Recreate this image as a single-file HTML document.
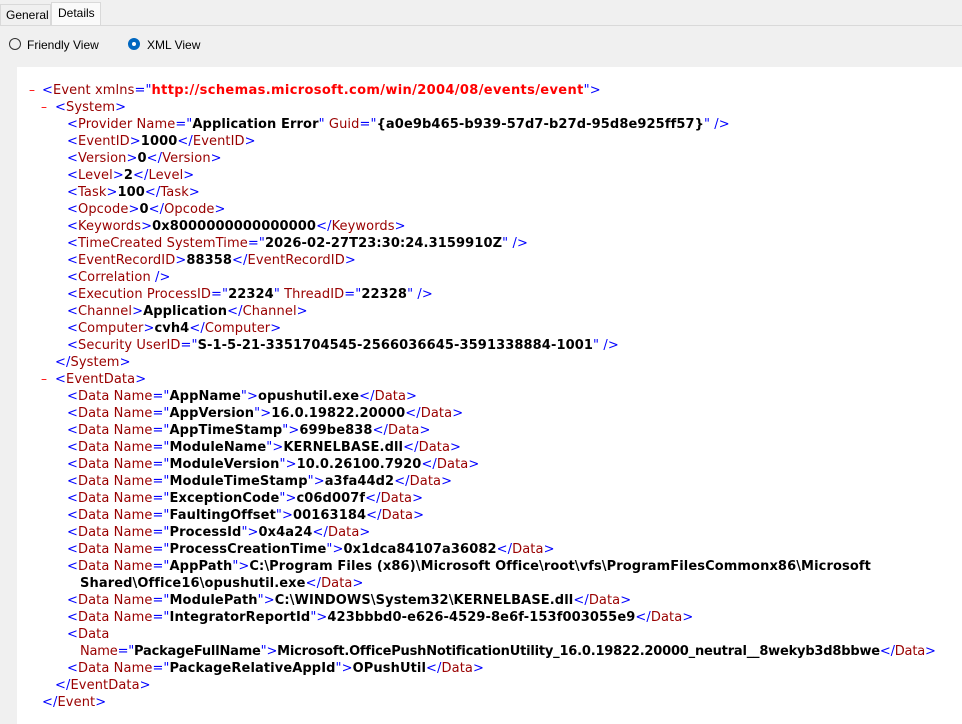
<!DOCTYPE html>
<html><head><style>
body{margin:0;width:962px;height:724px;background:#f0f0f0;font-family:"Liberation Sans",sans-serif;overflow:hidden;position:relative}
.tab{position:absolute;font-size:12px;color:#000}
.rad{position:absolute;top:38px;width:12px;height:12px;border-radius:50%;box-sizing:border-box}
.box{position:absolute;left:17px;top:67px;right:0;bottom:0;background:#fff}
.l{position:absolute;white-space:pre;font-family:"DejaVu Sans",Verdana,sans-serif;font-size:13px;letter-spacing:0.1px;line-height:17px;color:#000}
.m{position:absolute;font-family:"DejaVu Sans",sans-serif;font-size:12px;line-height:17px;color:#ff0000}
.b{color:#0000ff}.t{color:#990000}.r{color:#ff0000}.v{font-weight:bold}.rv{color:#ff0000;font-weight:bold}
</style></head><body>
<div style="position:absolute;left:0;top:4px;width:51px;height:21px;border:1px solid #d9d9d9;border-bottom:none;box-sizing:border-box"></div>
<div style="position:absolute;left:51px;top:2px;width:50px;height:24px;background:#fafafa;border:1px solid #d9d9d9;border-bottom:none;box-sizing:border-box"></div>
<div style="position:absolute;left:0;top:25px;right:0;height:1px;background:#d9d9d9"></div>
<div class="tab" style="left:6px;top:8px">General</div>
<div class="tab" style="left:58px;top:6px">Details</div>
<div class="rad" style="left:9px;border:1px solid #333"></div>
<div class="tab" style="left:27px;top:38px">Friendly View</div>
<div class="rad" style="left:128px;border:4px solid #0067c0;background:#fff"></div>
<div class="tab" style="left:147px;top:38px">XML View</div>
<div class="box"></div>
<div class="m" style="left:29px;top:82px">–</div>
<div class="m" style="left:41px;top:99px">–</div>
<div class="m" style="left:41px;top:371px">–</div>
<div class="l" style="left:42px;top:82px"><span class="b">&lt;</span><span class="t">Event xmlns</span><span class="b">="</span><span class="rv" style="letter-spacing:0.35px">http://schemas.microsoft.com/win/2004/08/events/event</span><span class="b">"&gt;</span></div>
<div class="l" style="left:55px;top:99px"><span class="b">&lt;</span><span class="t">System</span><span class="b">&gt;</span></div>
<div class="l" style="left:67px;top:116px"><span class="b">&lt;</span><span class="t">Provider Name</span><span class="b">="</span><span class="v">Application Error</span><span class="b">"</span> <span class="t">Guid</span><span class="b">="</span><span class="v">{a0e9b465-b939-57d7-b27d-95d8e925ff57}</span><span class="b">" /&gt;</span></div>
<div class="l" style="left:67px;top:133px"><span class="b">&lt;</span><span class="t">EventID</span><span class="b">&gt;</span><span class="v">1000</span><span class="b">&lt;/</span><span class="t">EventID</span><span class="b">&gt;</span></div>
<div class="l" style="left:67px;top:150px"><span class="b">&lt;</span><span class="t">Version</span><span class="b">&gt;</span><span class="v">0</span><span class="b">&lt;/</span><span class="t">Version</span><span class="b">&gt;</span></div>
<div class="l" style="left:67px;top:167px"><span class="b">&lt;</span><span class="t">Level</span><span class="b">&gt;</span><span class="v">2</span><span class="b">&lt;/</span><span class="t">Level</span><span class="b">&gt;</span></div>
<div class="l" style="left:67px;top:184px"><span class="b">&lt;</span><span class="t">Task</span><span class="b">&gt;</span><span class="v">100</span><span class="b">&lt;/</span><span class="t">Task</span><span class="b">&gt;</span></div>
<div class="l" style="left:67px;top:201px"><span class="b">&lt;</span><span class="t">Opcode</span><span class="b">&gt;</span><span class="v">0</span><span class="b">&lt;/</span><span class="t">Opcode</span><span class="b">&gt;</span></div>
<div class="l" style="left:67px;top:218px"><span class="b">&lt;</span><span class="t">Keywords</span><span class="b">&gt;</span><span class="v">0x8000000000000000</span><span class="b">&lt;/</span><span class="t">Keywords</span><span class="b">&gt;</span></div>
<div class="l" style="left:67px;top:235px"><span class="b">&lt;</span><span class="t">TimeCreated SystemTime</span><span class="b">="</span><span class="v">2026-02-27T23:30:24.3159910Z</span><span class="b">" /&gt;</span></div>
<div class="l" style="left:67px;top:252px"><span class="b">&lt;</span><span class="t">EventRecordID</span><span class="b">&gt;</span><span class="v">88358</span><span class="b">&lt;/</span><span class="t">EventRecordID</span><span class="b">&gt;</span></div>
<div class="l" style="left:67px;top:269px"><span class="b">&lt;</span><span class="t">Correlation</span><span class="b"> /&gt;</span></div>
<div class="l" style="left:67px;top:286px"><span class="b">&lt;</span><span class="t">Execution ProcessID</span><span class="b">="</span><span class="v">22324</span><span class="b">"</span> <span class="t">ThreadID</span><span class="b">="</span><span class="v">22328</span><span class="b">" /&gt;</span></div>
<div class="l" style="left:67px;top:303px"><span class="b">&lt;</span><span class="t">Channel</span><span class="b">&gt;</span><span class="v">Application</span><span class="b">&lt;/</span><span class="t">Channel</span><span class="b">&gt;</span></div>
<div class="l" style="left:67px;top:320px"><span class="b">&lt;</span><span class="t">Computer</span><span class="b">&gt;</span><span class="v">cvh4</span><span class="b">&lt;/</span><span class="t">Computer</span><span class="b">&gt;</span></div>
<div class="l" style="left:67px;top:337px"><span class="b">&lt;</span><span class="t">Security UserID</span><span class="b">="</span><span class="v">S-1-5-21-3351704545-2566036645-3591338884-1001</span><span class="b">" /&gt;</span></div>
<div class="l" style="left:55px;top:354px"><span class="b">&lt;/</span><span class="t">System</span><span class="b">&gt;</span></div>
<div class="l" style="left:55px;top:371px"><span class="b">&lt;</span><span class="t">EventData</span><span class="b">&gt;</span></div>
<div class="l" style="left:67px;top:388px"><span class="b">&lt;</span><span class="t">Data Name</span><span class="b">="</span><span class="v">AppName</span><span class="b">"&gt;</span><span class="v">opushutil.exe</span><span class="b">&lt;/</span><span class="t">Data</span><span class="b">&gt;</span></div>
<div class="l" style="left:67px;top:405px"><span class="b">&lt;</span><span class="t">Data Name</span><span class="b">="</span><span class="v">AppVersion</span><span class="b">"&gt;</span><span class="v">16.0.19822.20000</span><span class="b">&lt;/</span><span class="t">Data</span><span class="b">&gt;</span></div>
<div class="l" style="left:67px;top:422px"><span class="b">&lt;</span><span class="t">Data Name</span><span class="b">="</span><span class="v">AppTimeStamp</span><span class="b">"&gt;</span><span class="v">699be838</span><span class="b">&lt;/</span><span class="t">Data</span><span class="b">&gt;</span></div>
<div class="l" style="left:67px;top:439px"><span class="b">&lt;</span><span class="t">Data Name</span><span class="b">="</span><span class="v">ModuleName</span><span class="b">"&gt;</span><span class="v">KERNELBASE.dll</span><span class="b">&lt;/</span><span class="t">Data</span><span class="b">&gt;</span></div>
<div class="l" style="left:67px;top:456px"><span class="b">&lt;</span><span class="t">Data Name</span><span class="b">="</span><span class="v">ModuleVersion</span><span class="b">"&gt;</span><span class="v">10.0.26100.7920</span><span class="b">&lt;/</span><span class="t">Data</span><span class="b">&gt;</span></div>
<div class="l" style="left:67px;top:473px"><span class="b">&lt;</span><span class="t">Data Name</span><span class="b">="</span><span class="v">ModuleTimeStamp</span><span class="b">"&gt;</span><span class="v">a3fa44d2</span><span class="b">&lt;/</span><span class="t">Data</span><span class="b">&gt;</span></div>
<div class="l" style="left:67px;top:490px"><span class="b">&lt;</span><span class="t">Data Name</span><span class="b">="</span><span class="v">ExceptionCode</span><span class="b">"&gt;</span><span class="v">c06d007f</span><span class="b">&lt;/</span><span class="t">Data</span><span class="b">&gt;</span></div>
<div class="l" style="left:67px;top:507px"><span class="b">&lt;</span><span class="t">Data Name</span><span class="b">="</span><span class="v">FaultingOffset</span><span class="b">"&gt;</span><span class="v">00163184</span><span class="b">&lt;/</span><span class="t">Data</span><span class="b">&gt;</span></div>
<div class="l" style="left:67px;top:524px"><span class="b">&lt;</span><span class="t">Data Name</span><span class="b">="</span><span class="v">ProcessId</span><span class="b">"&gt;</span><span class="v">0x4a24</span><span class="b">&lt;/</span><span class="t">Data</span><span class="b">&gt;</span></div>
<div class="l" style="left:67px;top:541px"><span class="b">&lt;</span><span class="t">Data Name</span><span class="b">="</span><span class="v">ProcessCreationTime</span><span class="b">"&gt;</span><span class="v">0x1dca84107a36082</span><span class="b">&lt;/</span><span class="t">Data</span><span class="b">&gt;</span></div>
<div class="l" style="left:67px;top:558px"><span class="b">&lt;</span><span class="t">Data Name</span><span class="b">="</span><span class="v">AppPath</span><span class="b">"&gt;</span><span class="v">C:\Program Files (x86)\Microsoft Office\root\vfs\ProgramFilesCommonx86\Microsoft</span></div>
<div class="l" style="left:80px;top:575px"><span class="v">Shared\Office16\opushutil.exe</span><span class="b">&lt;/</span><span class="t">Data</span><span class="b">&gt;</span></div>
<div class="l" style="left:67px;top:592px"><span class="b">&lt;</span><span class="t">Data Name</span><span class="b">="</span><span class="v">ModulePath</span><span class="b">"&gt;</span><span class="v">C:\WINDOWS\System32\KERNELBASE.dll</span><span class="b">&lt;/</span><span class="t">Data</span><span class="b">&gt;</span></div>
<div class="l" style="left:67px;top:609px"><span class="b">&lt;</span><span class="t">Data Name</span><span class="b">="</span><span class="v">IntegratorReportId</span><span class="b">"&gt;</span><span class="v">423bbbd0-e626-4529-8e6f-153f003055e9</span><span class="b">&lt;/</span><span class="t">Data</span><span class="b">&gt;</span></div>
<div class="l" style="left:67px;top:626px"><span class="b">&lt;</span><span class="t">Data</span></div>
<div class="l" style="left:80px;top:643px;letter-spacing:-0.2px"><span class="t">Name</span><span class="b">="</span><span class="v">PackageFullName</span><span class="b">"&gt;</span><span class="v">Microsoft.OfficePushNotificationUtility_16.0.19822.20000_neutral__8wekyb3d8bbwe</span><span class="b">&lt;/</span><span class="t">Data</span><span class="b">&gt;</span></div>
<div class="l" style="left:67px;top:660px"><span class="b">&lt;</span><span class="t">Data Name</span><span class="b">="</span><span class="v">PackageRelativeAppId</span><span class="b">"&gt;</span><span class="v">OPushUtil</span><span class="b">&lt;/</span><span class="t">Data</span><span class="b">&gt;</span></div>
<div class="l" style="left:55px;top:677px"><span class="b">&lt;/</span><span class="t">EventData</span><span class="b">&gt;</span></div>
<div class="l" style="left:42px;top:694px"><span class="b">&lt;/</span><span class="t">Event</span><span class="b">&gt;</span></div>
</body></html>
